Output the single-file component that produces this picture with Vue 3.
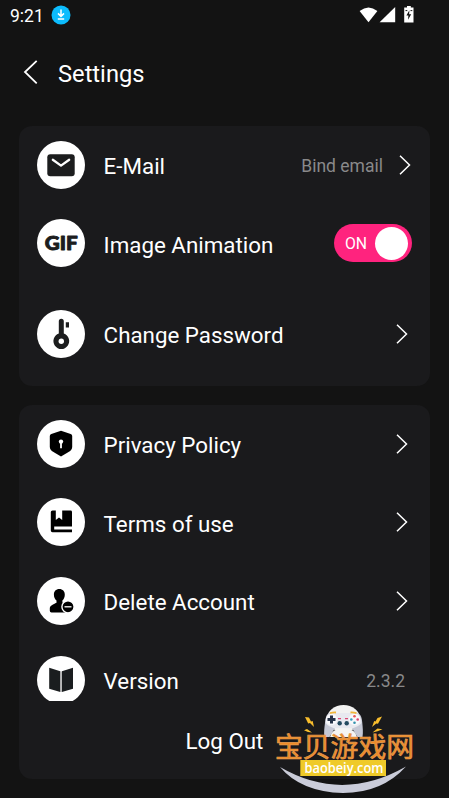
<script setup>
const account = [
  { id: 'mail', label: 'E-Mail', note: 'Bind email' },
  { id: 'gif', label: 'Image Animation' },
  { id: 'key', label: 'Change Password' },
]
const about = [
  { id: 'shield', label: 'Privacy Policy' },
  { id: 'book', label: 'Terms of use' },
  { id: 'user', label: 'Delete Account' },
  { id: 'version', label: 'Version', note: '2.3.2' },
]
const groups = [account, about]
</script>

<template>
  <main class="screen">
    <div class="status">
      <span class="time">9:21</span>
      <svg class="download" width="20" height="20" viewBox="0 0 20 20">
        <circle cx="10" cy="10" r="9.5" fill="#0cbcfd" />
        <path d="M10 4.500V11M7 8.400l3 3 3-3M6.800 14h6.400" fill="none" stroke="#fff" stroke-width="1.500" />
      </svg>
      <svg class="signals" width="56" height="18" viewBox="0 0 56 18">
        <path d="M.6 5Q9.500-2 18.400 5L9.500 16.200Z" fill="#fff" />
        <path d="M36.200 1V16.200H20.600Z" fill="#fff" />
        <path d="M48 0h3.800v1.400H54.500v15h-9.300v-15H48Z" fill="#fff" />
        <path d="M50.400 4.200l-3 5.200h2l-.4 4.300 3.200-5.500h-2.100Z" fill="#131313" />
        <path d="M46.500 4.600h1.800M51.500 4.600h1.800" stroke="#131313" />
      </svg>
    </div>

    <header class="header">
      <svg width="16" height="26" viewBox="0 0 16 26">
        <path d="M13.700 1.800L2 13l11.700 11.300" fill="none" stroke="#fff" stroke-width="1.800" />
      </svg>
      <h1>Settings</h1>
    </header>

    <section v-for="(rows, i) in groups" :key="i" class="card">
      <div v-for="row in rows" :key="row.id" class="row" :class="row.id">
        <span class="badge">
          <svg width="48" height="48" viewBox="0 0 48 48">
            <g v-if="row.id === 'mail'">
              <rect x="10.300" y="13.200" width="27.400" height="22" rx="3" fill="#1c1d1e" />
              <path d="M15.800 18.800l8.200 5.800 8.200-5.800" fill="none" stroke="#fff" stroke-width="2.300" stroke-linecap="round" stroke-linejoin="round" />
            </g>
            <text v-else-if="row.id === 'gif'" class="gif-text" x="24.300" y="31.300" text-anchor="middle" textLength="33" lengthAdjust="spacingAndGlyphs">GIF</text>
            <g v-else-if="row.id === 'key'" fill="#1c1d1e">
              <path d="M21.800 11.300a2.500 2.500 0 0 1 5 0V23.600a7.900 7.900 0 1 1-5 0Z" />
              <path d="M28.800 12.200h3.200v5.300h-3.200Z" />
              <circle cx="24.300" cy="31.200" r="2.700" fill="#fff" />
            </g>
            <g v-else-if="row.id === 'shield'">
              <path d="M24 10.800l9.700 3.200q1.500.6 1.500 2v11q0 2.400-2 4L24 36.400 14.800 31q-2-1.600-2-4V16q0-1.400 1.500-2Z" fill="#000" />
              <circle cx="24" cy="21.600" r="2.200" fill="#fff" />
              <path d="M24 22v6.300" stroke="#fff" stroke-width="1.800" />
            </g>
            <g v-else-if="row.id === 'book'">
              <path d="M15.500 12.500H18.800v9.400l3.200-2.400 3.200 2.400V12.500h8.400q1.400 0 1.400 1.400V28.600H17.200v2.800H35v2.900H15.500q-1.700 0-1.700-1.700V14q0-1.500 1.700-1.500Z" fill="#000" />
            </g>
            <g v-else-if="row.id === 'user'">
              <path d="M22.300 12c3.400 0 5.500 2.300 5.500 5.700 0 2.500-1 4.400-2.400 5.800v2l5 2.500v7.500H14.500q-1.700 0-1.700-1.800v-2.200c0-2.900 3.500-4 6.700-5.700v-2.300c-1.600-1.400-2.600-3.300-2.600-5.800 0-3.400 2-5.700 5.400-5.700Z" fill="#000" />
              <circle cx="31" cy="29.800" r="6.100" fill="#000" stroke="#fff" stroke-width="1.400" />
              <path d="M27.500 29.800h7" stroke="#fff" stroke-width="1.300" />
            </g>
            <g v-else fill="#1a1d1f">
              <path d="M12.200 11.700l11.100 3.600V36l-11.100-3.300ZM24.900 15.300L36 11.700v21L24.900 36Z" />
              <path d="M24.100 15.500V36" stroke="#999" />
            </g>
          </svg>
        </span>
        <span class="label">{{ row.label }}</span>
        <span v-if="row.note" class="note">{{ row.note }}</span>
        <span v-if="row.id === 'gif'" class="toggle">ON<i class="knob"></i></span>
        <svg v-else-if="row.id !== 'version'" class="chevron" width="12" height="20" viewBox="0 0 12 20">
          <path d="M1 .8L10.500 10 1 19.200" fill="none" stroke="#fff" stroke-width="1.500" />
        </svg>
      </div>
      <div v-if="i === 1" class="logout">Log Out</div>
    </section>

    <svg class="watermark" width="150" height="98" viewBox="0 0 150 98">
      <path d="M10 67Q72 103 136 66.500Q112 93 73 93Q31 92 10 67Z" fill="#caccd9" />
      <ellipse cx="73.500" cy="18.500" rx="16.500" ry="13.500" fill="#f2f2f1" />
      <path d="M60 13h27c4 1 5 5 5.300 10 .4 5 1 9 .2 14h-5L82 28H65l-5.500 9h-5c-.8-5-.1-9 .5-14 .6-5 1-9 5-10Z" fill="#c5c8d5" />
      <path d="M62 13h23c4 0 6 4 6.500 10-2 3-6 4-8 5H63.500c-2-1-6-2-8-5C56 17 58 13 62 13Z" fill="#e8e9ef" />
      <path d="M60 37q1-8 13.500-9Q86 29 87 37Z" fill="#f5f5f3" />
      <circle cx="61.500" cy="19.500" r="5.700" fill="#f8f8fb" />
      <circle cx="84.500" cy="19.500" r="5.700" fill="#f8f8fb" />
      <path d="M61.500 15.500v8M57.500 19.500h8" stroke="#263348" stroke-width="3" />
      <circle cx="84.500" cy="16.300" r="1.300" fill="#e95758" />
      <circle cx="87.700" cy="19.500" r="1.300" fill="#dd426f" />
      <circle cx="84.500" cy="22.700" r="1.300" fill="#3692ae" />
      <circle cx="81.300" cy="19.500" r="1.300" fill="#34a1c1" />
      <path d="M68 18.600h3M75 18.600h3" stroke="#d94773" stroke-width="1.300" />
      <circle cx="69.700" cy="23.200" r="2.200" fill="#244b60" />
      <circle cx="76.700" cy="23.200" r="2.200" fill="#244b60" />
      <path d="M60 13.100q3-.8 6-.6M80.500 12.500q3-.2 6 .6" stroke="#f0b639" stroke-width="1.800" fill="none" />
      <path d="M35 17l4 .5 2 4 1.700-.5 1.300 6-4-4-1.800.5ZM112 16.500l-4.500 1.500-2 3.500-1.300-.5L102 27l4.200-3.500 1.800.2ZM34 30.300l3-1.300 5 3.500-4-.5ZM112.500 29.300l-5-.8-5 4 5-1.300Z" fill="#f8bd2d" />
      <text class="brand" x="5" y="57" textLength="139" lengthAdjust="spacingAndGlyphs">宝贝游戏网</text>
      <rect x="30.300" y="60" width="85.700" height="16" fill="#efca29" />
      <text class="domain" x="34.500" y="73" textLength="79" lengthAdjust="spacingAndGlyphs">baobeiy.com</text>
    </svg>
  </main>
</template>

<style>
body {
  margin: 0;
  background: #131313;
}
</style>

<style scoped>
.screen {
  position: relative;
  box-sizing: border-box;
  width: 449px;
  height: 798px;
  padding: 0 19px;
  overflow: hidden;
  background: #131313;
  color: #fff;
  font-family: Roboto, sans-serif;
}
.status {
  display: flex;
  align-items: center;
  height: 30px;
  margin: 0 15px 0 -9px;
}
.time {
  width: 41px;
  font-size: 17.500px;
  line-height: 20px;
  padding-top: 1px;
}
.signals {
  margin: -1px 0 0 auto;
}
.header {
  display: flex;
  align-items: center;
  gap: 19px;
  height: 84px;
  margin: 0 0 12px 4px;
}
h1 {
  margin: 3px 0 0;
  font-size: 23.700px;
  font-weight: 400;
  line-height: 28px;
}
.header svg {
  margin-top: -1px;
}
.card {
  width: 411px;
  height: 260px;
  margin-bottom: 19px;
  border-radius: 13px;
  background: #1a1a1c;
  overflow: hidden;
}
.card + .card {
  height: 374px;
}
.row {
  display: flex;
  align-items: center;
  box-sizing: border-box;
  height: 78.600px;
  padding: 0 22px 1px 18px;
}
.row.key {
  height: 102.800px;
}
.row.version {
  align-items: flex-start;
  height: 60px;
  padding: 15px 25px 0 18px;
  overflow: hidden;
}
.badge {
  flex: none;
  width: 48px;
  height: 48px;
  margin-right: 18.600px;
  border-radius: 50%;
  background: #fff;
}
.badge svg {
  display: block;
}
.gif-text {
  font: 900 19px Lato, sans-serif;
  fill: #1c1d1e;
  stroke: #1c1d1e;
  stroke-width: 0.900px;
  stroke-linejoin: round;
}
.label {
  padding-top: 2.800px;
  font-size: 22.350px;
  line-height: 28px;
  white-space: nowrap;
}
.note {
  margin-left: auto;
  padding-top: 3px;
  font-size: 17.500px;
  line-height: 24px;
  color: #89898a;
}
.chevron {
  margin-left: auto;
}
.note + .chevron {
  margin: 0 -3px 0 16px;
}
.version .label {
  padding-top: 11px;
}
.version .note {
  padding-top: 13px;
}
.toggle {
  display: flex;
  align-items: center;
  justify-content: space-between;
  box-sizing: border-box;
  width: 78px;
  height: 38px;
  margin: 0 -4px 0 auto;
  padding: 0 4px 0 11px;
  border-radius: 19px;
  background: #ff237e;
  font-size: 15.800px;
}
.knob {
  width: 33px;
  height: 33px;
  border-radius: 50%;
  background: #fff;
}
.logout {
  height: 78px;
  font-size: 22.350px;
  line-height: 81px;
  text-align: center;
}
.watermark {
  position: absolute;
  left: 270px;
  top: 700px;
}
.brand {
  font: 400 27px "Noto Sans CJK SC", sans-serif;
  fill: #ee8b26;
  stroke: #e59a50;
  stroke-width: 0.700px;
}
.domain {
  font: 600 15px "Open Sans", sans-serif;
  fill: #fff;
}
</style>
